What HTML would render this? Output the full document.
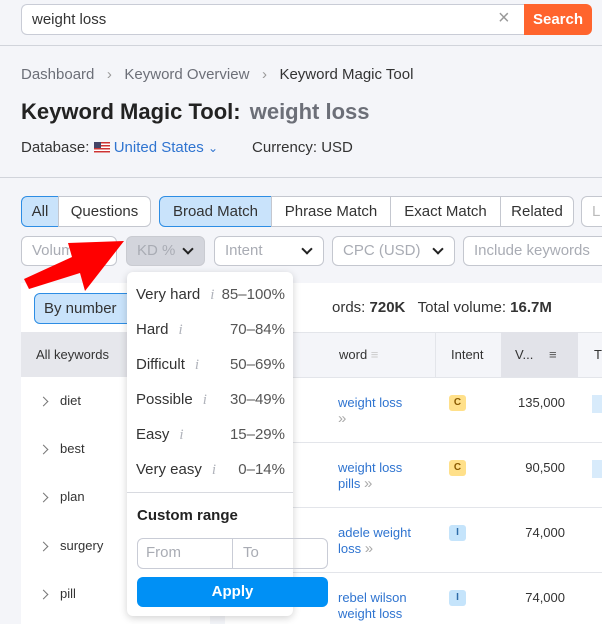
<!DOCTYPE html>
<html><head><meta charset="utf-8"><style>
*{box-sizing:border-box;margin:0;padding:0}
body{width:602px;height:624px;overflow:hidden;background:#f4f5f9;font-family:"Liberation Sans",sans-serif;color:#333;position:relative;font-size:14px}
.a{position:absolute}
.inp{left:21px;top:4px;width:504px;height:31px;background:#fff;border:1px solid #c9ccd6;border-right:none;border-radius:6px 0 0 6px}
.btn{left:524px;top:4px;width:68px;height:31px;background:#ff642d;color:#fff;font-weight:bold;font-size:15px;border-radius:0 6px 6px 0;text-align:center;line-height:31px}
.hr{left:0;width:602px;height:1px;background:#d1d4db}
.tab{position:absolute;top:196px;height:31px;border:1px solid #c4c7cf;background:#fff;font-size:15px;line-height:29px;text-align:center;color:#333}
.sel{background:#c9e3fb;border-color:#2d8de4}
.f{position:absolute;top:236px;height:30px;border:1px solid #c4c7cf;background:#fff;border-radius:6px;font-size:15px;line-height:28px;color:#a9acb4;padding-left:10px}
.chev{position:absolute;right:12px;top:8px;width:8px;height:8px;border-right:2px solid #222;border-bottom:2px solid #222;transform:rotate(45deg)}
.dd{left:127px;top:272px;width:166px;height:344px;background:#fff;border-radius:6px;box-shadow:0 2px 8px rgba(0,0,0,.18)}
.it{position:absolute;left:9px;width:149px;font-size:15px;color:#333}
.it i{font-family:"Liberation Serif",serif;color:#b0b3bb;margin-left:10px}
.it b{position:absolute;right:0;top:0;font-weight:normal;color:#555}
.row{position:absolute;left:225px;width:377px;height:1px;background:#e3e5ea}
.kw{position:absolute;left:338px;color:#2f74d0;font-size:13px;line-height:16px}
.badge{position:absolute;left:449px;width:17px;height:16px;border-radius:3px;font-size:10px;font-weight:bold;text-align:center;line-height:16px}
.vol{position:absolute;left:515px;width:50px;text-align:right;font-size:13px}
.side{position:absolute;left:43px;font-size:13px;color:#333}
.side:before{content:"";position:absolute;left:-3px;top:5px;width:6px;height:6px;border-right:1.5px solid #777;border-top:1.5px solid #777;transform:rotate(45deg)}
.side span{margin-left:17px}
</style></head><body>
<div class="a inp"></div>
<div class="a" style="left:32px;top:11px;font-size:15px">weight loss</div>
<div class="a" style="left:498px;top:7px;font-size:20px;color:#999">×</div>
<div class="a btn">Search</div>
<div class="a hr" style="top:45px"></div>
<div class="a" style="left:21px;top:66px;font-size:15px;color:#6c6f78">Dashboard &nbsp;&nbsp;<span style="color:#999">›</span>&nbsp;&nbsp; Keyword Overview &nbsp;&nbsp;<span style="color:#999">›</span>&nbsp;&nbsp; <span style="color:#333">Keyword Magic Tool</span></div>
<div class="a" style="left:21px;top:99px;font-size:22px;font-weight:bold;color:#222">Keyword Magic Tool: <span style="color:#6c6f78;margin-left:3px">weight loss</span></div>
<div class="a" style="left:21px;top:139px;font-size:15px;color:#333">Database: <span style="display:inline-block;width:16px;height:11px;background:repeating-linear-gradient(#c33 0 1.5px,#fff 1.5px 3px);position:relative;vertical-align:-1px"><span style="position:absolute;left:0;top:0;width:7px;height:6px;background:#446"></span></span> <span style="color:#2f74d0">United States</span> <span style="color:#2f74d0;font-size:12px">⌄</span><span style="margin-left:34px">Currency: USD</span></div>
<div class="a hr" style="top:177px"></div>
<div class="tab sel" style="left:21px;width:38px;border-radius:6px 0 0 6px">All</div>
<div class="tab" style="left:58px;width:93px;border-radius:0 6px 6px 0">Questions</div>
<div class="tab sel" style="left:159px;width:113px;border-radius:6px 0 0 6px">Broad Match</div>
<div class="tab" style="left:271px;width:120px">Phrase Match</div>
<div class="tab" style="left:390px;width:111px">Exact Match</div>
<div class="tab" style="left:500px;width:74px;border-radius:0 6px 6px 0">Related</div>
<div class="tab" style="left:581px;width:40px;border-radius:6px;text-align:left;padding-left:10px;color:#bbb">L</div>
<div class="f" style="left:21px;width:96px">Volume</div>
<div class="f" style="left:126px;width:79px;background:#d3d5dc;border-color:#c9cbd1">KD %<span class="chev"></span></div>
<div class="f" style="left:214px;width:110px">Intent<span class="chev"></span></div>
<div class="f" style="left:332px;width:123px">CPC (USD)<span class="chev"></span></div>
<div class="f" style="left:463px;width:150px">Include keywords</div>
<div class="a" style="left:21px;top:283px;width:581px;height:341px;background:#fff"></div>
<div class="a" style="left:34px;top:293px;width:100px;height:31px;background:#c9e3fb;border:1px solid #2d8de4;border-radius:6px;font-size:15px;line-height:29px;padding-left:9px">By number</div>
<div class="a" style="left:332px;top:299px;font-size:15px">ords: <b>720K</b>&nbsp;&nbsp; Total volume: <b>16.7M</b></div>
<div class="a" style="left:21px;top:332px;width:189px;height:45px;background:#e6e7ec"></div>
<div class="a" style="left:36px;top:347px;font-size:13px">All keywords</div>
<div class="a" style="left:210px;top:332px;width:15px;height:292px;background:#f4f5f9"></div>
<div class="a" style="left:225px;top:332px;width:377px;height:45px;background:#f4f5f9;border-top:1px solid #e3e5ea"></div>
<div class="a" style="left:435px;top:332px;width:1px;height:45px;background:#e3e5ea"></div>
<div class="a" style="left:501px;top:332px;width:77px;height:45px;background:#e2e3e9"></div>
<div class="a" style="left:339px;top:347px;font-size:13px">word <span style="color:#ccc">≡</span></div>
<div class="a" style="left:451px;top:347px;font-size:13px">Intent</div>
<div class="a" style="left:515px;top:347px;font-size:13px">V... <span style="margin-left:12px;font-weight:bold;color:#555">≡</span></div>
<div class="a" style="left:594px;top:347px;font-size:13px">T</div>
<div class="row" style="top:377px"></div><div class="row" style="top:442px"></div><div class="row" style="top:507px"></div><div class="row" style="top:572px"></div>
<div class="kw" style="top:395px">weight loss<br><span style="color:#aaa;font-size:15px">»</span></div>
<div class="kw" style="top:460px">weight loss<br>pills <span style="color:#aaa;font-size:15px">»</span></div>
<div class="kw" style="top:525px">adele weight<br>loss <span style="color:#aaa;font-size:15px">»</span></div>
<div class="kw" style="top:590px">rebel wilson<br>weight loss</div>
<div class="badge" style="top:395px;background:#ffe08a;color:#8a5a00">C</div>
<div class="badge" style="top:460px;background:#ffe08a;color:#8a5a00">C</div>
<div class="badge" style="top:525px;background:#c5e4fb;color:#2d6ca8">I</div>
<div class="badge" style="top:590px;background:#c5e4fb;color:#2d6ca8">I</div>
<div class="vol" style="top:395px">135,000</div><div class="vol" style="top:460px">90,500</div><div class="vol" style="top:525px">74,000</div><div class="vol" style="top:590px">74,000</div>
<div class="a" style="left:592px;top:395px;width:10px;height:18px;background:#d8ebfb"></div>
<div class="a" style="left:592px;top:460px;width:10px;height:18px;background:#d8ebfb"></div>
<div class="side" style="top:393px"><span>diet</span></div>
<div class="side" style="top:441px"><span>best</span></div>
<div class="side" style="top:489px"><span>plan</span></div>
<div class="side" style="top:538px"><span>surgery</span></div>
<div class="side" style="top:586px"><span>pill</span></div>
<div class="a dd">
<div class="it" style="top:14px">Very hard<i>i</i><b>85–100%</b></div>
<div class="it" style="top:49px">Hard<i>i</i><b>70–84%</b></div>
<div class="it" style="top:84px">Difficult<i>i</i><b>50–69%</b></div>
<div class="it" style="top:119px">Possible<i>i</i><b>30–49%</b></div>
<div class="it" style="top:154px">Easy<i>i</i><b>15–29%</b></div>
<div class="it" style="top:189px">Very easy<i>i</i><b>0–14%</b></div>
<div class="a" style="left:0;top:220px;width:166px;height:1px;background:#d8dae0"></div>
<div class="a" style="left:10px;top:235px;font-size:15px;font-weight:bold;color:#222">Custom range</div>
<div class="a" style="left:10px;top:266px;width:191px;height:31px;border:1px solid #c9ccd6;border-radius:6px"></div>
<div class="a" style="left:105px;top:266px;width:1px;height:31px;background:#c9ccd6"></div>
<div class="a" style="left:19px;top:272px;font-size:15px;color:#a9acb4">From</div>
<div class="a" style="left:116px;top:272px;font-size:15px;color:#a9acb4">To</div>
<div class="a" style="left:10px;top:305px;width:191px;height:30px;background:#0090f5;border-radius:6px;color:#fff;font-weight:bold;font-size:15px;text-align:center;line-height:30px">Apply</div>
</div>
<svg class="a" style="left:0;top:0" width="602" height="624"><polygon points="124,241 85,291 80,273 29,289 24,279 72,257 68,243" fill="#f00"/></svg>
</body></html>
